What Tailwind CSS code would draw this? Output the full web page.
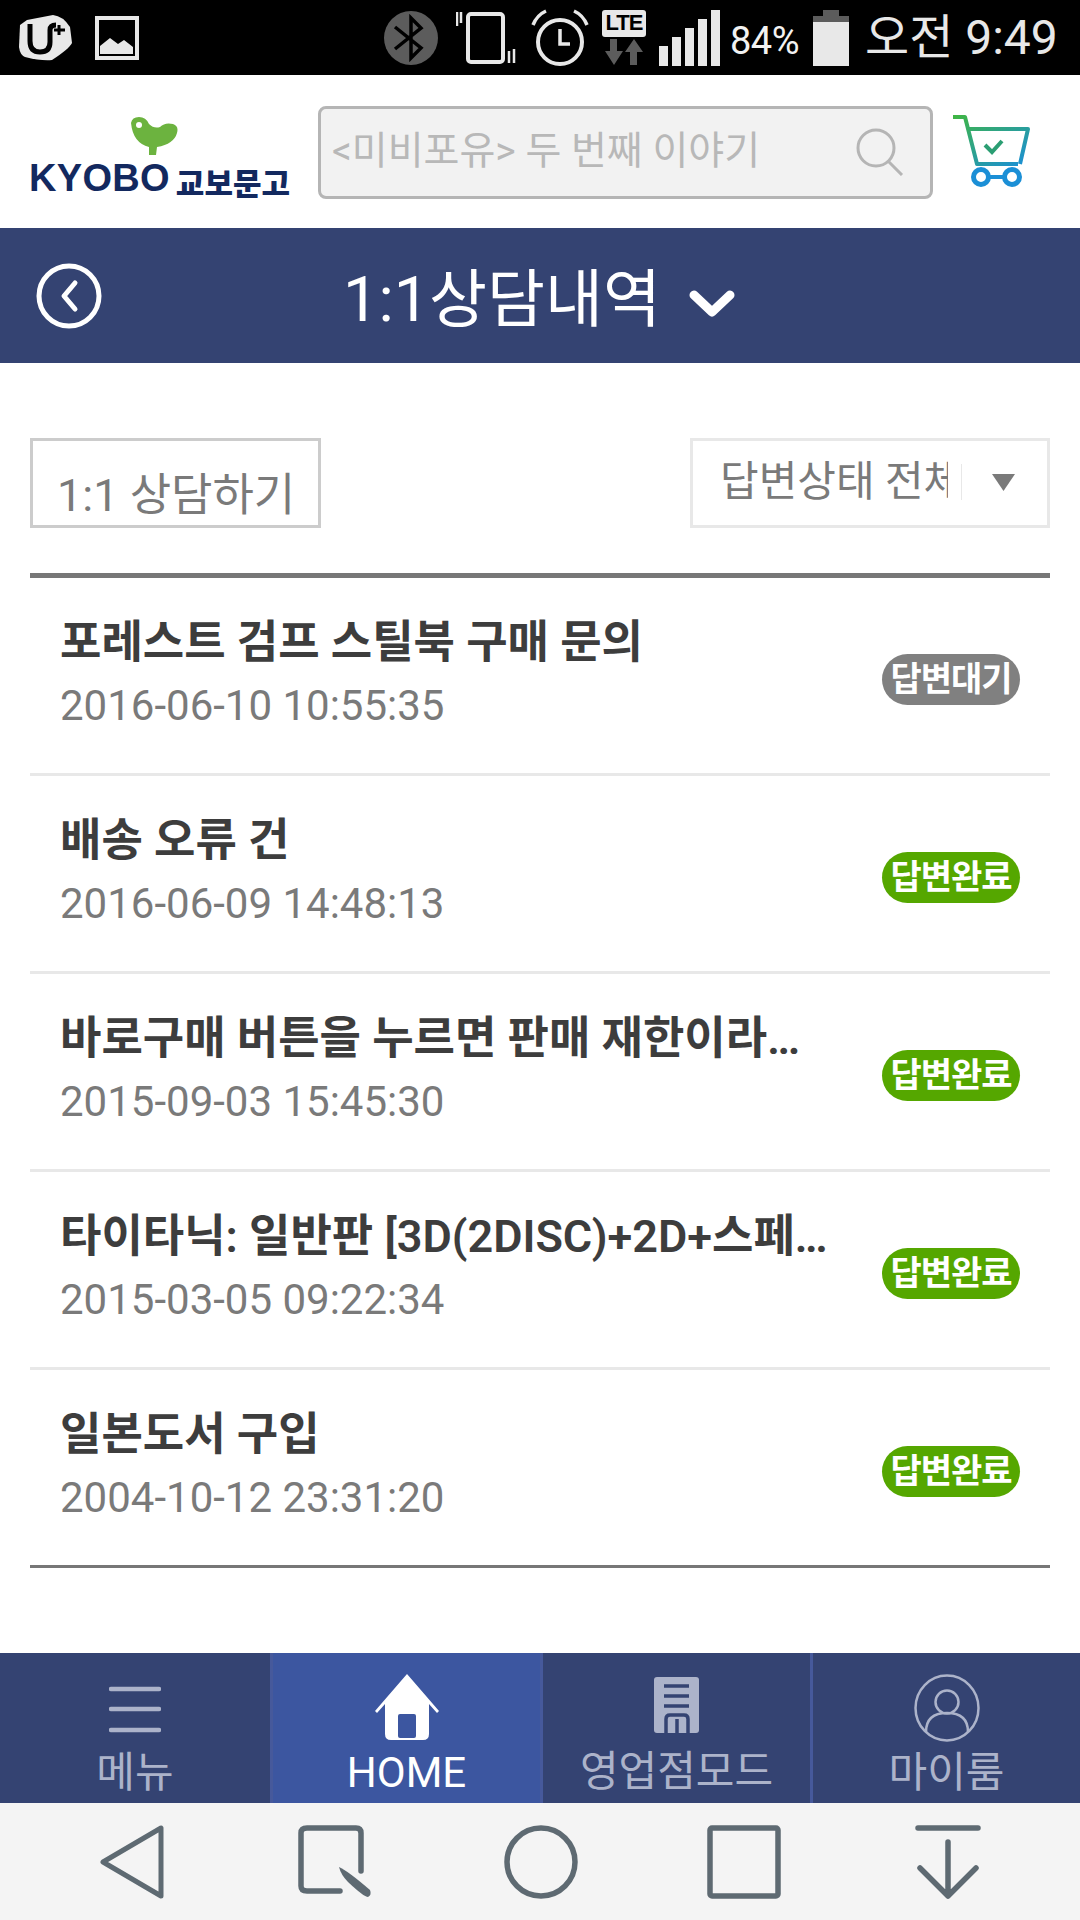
<!DOCTYPE html>
<html lang="ko">
<head>
    <meta charset="UTF-8">
    <meta name="viewport" content="width=device-width, initial-scale=1.0">
    <title>1:1상담내역 - 교보문고</title>
    <script src="https://cdn.jsdelivr.net/npm/@tailwindcss/browser@4"></script>
</head>
<body class="bg-white w-[1080px] h-[1920px] overflow-hidden flex flex-col font-['Roboto','Noto_Sans_CJK_KR',sans-serif]">
    <!-- status bar -->
    <div class="h-[75px] bg-black flex items-center text-[#e8e8e8] shrink-0">
        <svg class="ml-[19px] w-[53px] h-[46px]" viewBox="0 0 53 46">
            <path d="M8 5 L34 0 Q44 1 51 12 L53 28 Q50 34 33 45 Q22 46 6 42 Q1 40 0 32 L1 10 Z" fill="#e8e8e8"/>
            <path d="M11 9 V26 Q11 37 21 37 Q31 37 31 27 V15 Q31 10 37 10" fill="none" stroke="#000" stroke-width="5"/>
            <path d="M40 10 V20 M35 15 H46" fill="none" stroke="#000" stroke-width="3"/>
        </svg>
        <svg class="ml-[23px] w-[44px] h-[44px]" viewBox="0 0 44 44">
            <rect x="2" y="2" width="40" height="40" fill="none" stroke="#e8e8e8" stroke-width="4"/>
            <path d="M5 38 V30 L15 22 L23 28 L29 24 L38 31 V38 Z" fill="#e8e8e8"/>
        </svg>
        <svg class="ml-[245px] w-[54px] h-[54px]" viewBox="0 0 54 54">
            <circle cx="27" cy="27" r="27" fill="#5c5c5c"/>
            <path d="M11 16 L37 37 L27 47 V7 L37 17 L11 38" fill="none" stroke="#000" stroke-width="3.5"/>
        </svg>
        <svg class="ml-[18px] w-[60px] h-[54px]" viewBox="0 0 60 54">
            <rect x="12" y="3" width="35" height="48" rx="3" fill="none" stroke="#e8e8e8" stroke-width="4"/>
            <path d="M1 1 V15 M5 1 V12" stroke="#e8e8e8" stroke-width="2.5"/>
            <path d="M53 40 V52 M58 38 V52" stroke="#e8e8e8" stroke-width="2.5"/>
        </svg>
        <svg class="ml-[14px] w-[60px] h-[60px]" viewBox="0 0 60 60">
            <circle cx="30" cy="34" r="22" fill="none" stroke="#e8e8e8" stroke-width="4"/>
            <path d="M30 21 V36 H40" fill="none" stroke="#e8e8e8" stroke-width="3.5"/>
            <path d="M3 17 Q7 7 16 3 M57 17 Q53 7 44 3" fill="none" stroke="#e8e8e8" stroke-width="3.5"/>
        </svg>
        <div class="ml-[12px] w-[44px] h-[56px] relative">
            <div class="h-[27px] bg-[#e8e8e8] rounded-[3px] flex items-center justify-center text-[22px] leading-none font-bold text-black tracking-[-1px] font-['Liberation_Sans']">LTE</div>
            <svg class="absolute left-[2px] top-[29px] w-[40px] h-[27px]" viewBox="0 0 40 27">
                <path d="M6 0 H13 V12 H19 L10 26 L1 12 H6 Z M26 26 H33 V13 H39 L30 0 L21 13 H26 Z" fill="#5c5c5c"/>
            </svg>
        </div>
        <svg class="ml-[13px] w-[61px] h-[56px]" viewBox="0 0 61 56">
            <path d="M0 36 H9 V56 H0 Z M13 27 H22 V56 H13 Z M26 18 H35 V56 H26 Z M39 9 H48 V56 H39 Z M52 0 H61 V56 H52 Z" fill="#e8e8e8"/>
        </svg>
        <span class="ml-[10px] text-[38px] leading-none text-[#f2f2f2] mt-[6px] tracking-[-0.5px]">84%</span>
        <svg class="ml-[14px] w-[36px] h-[56px]" viewBox="0 0 36 56">
            <path d="M10 0 H26 V6 H36 V12 H0 V6 H10 Z" fill="#5c5c5c"/>
            <rect x="0" y="12" width="36" height="44" fill="#e8e8e8"/>
        </svg>
        <span class="ml-[16px] text-[48px] leading-none whitespace-nowrap">오전 9:49</span>
    </div>

    <!-- logo, search, cart -->
    <div class="h-[153px] flex items-center relative shrink-0">
        <div class="ml-[29px] w-[263px] flex flex-col items-start mt-[10px]">
            <svg class="ml-[101px] w-[48px] h-[40px]" viewBox="0 0 48 40">
                <path d="M1 6 Q2 0 9 0 Q16 0 19 7 Q24 12 30 10 Q35 5 43 7 Q49 9 47 16 Q44 27 27 30 L26 38 H19 L19 30 Q3 26 1 6 Z" fill="#6cb33f"/>
                <circle cx="9" cy="8" r="3" fill="#fff"/>
            </svg>
            <div class="flex items-end leading-none text-[#13295f] font-bold mt-[2px] whitespace-nowrap">
                <span class="text-[38px] tracking-[0.3px] font-['Liberation_Sans']">KYOBO</span>
                <span class="ml-[6px] text-[31px] font-black font-['Noto_Sans_CJK_KR']">교보문고</span>
            </div>
        </div>
        <div class="ml-[26px] w-[615px] h-[93px] bg-[#f2f2f2] border-[3px] border-[#b5b5b5] rounded-[8px] flex items-center pl-[11px] mt-[1px]">
            <span class="text-[39px] leading-none text-[#b8b8b8] whitespace-nowrap mb-[2px]">&lt;미비포유&gt; 두 번째 이야기</span>
        </div>
        <svg class="absolute left-[856px] top-[53px] w-[48px] h-[48px]" viewBox="0 0 48 48">
            <circle cx="20" cy="20" r="18" fill="none" stroke="#b5b5b5" stroke-width="3"/>
            <path d="M32 33 L46 47" stroke="#b5b5b5" stroke-width="3"/>
        </svg>
        <svg class="ml-[19px] w-[78px] h-[73px]" viewBox="0 0 78 73">
            <defs>
                <linearGradient id="cartGrad" x1="0" y1="0" x2="1" y2="1">
                    <stop offset="0" stop-color="#3fb544"/>
                    <stop offset="1" stop-color="#1b8fd6"/>
                </linearGradient>
            </defs>
            <path d="M1 2 H13 L25 49 H66 M15 14 H76 L68 49" fill="none" stroke="url(#cartGrad)" stroke-width="4" stroke-linejoin="round"/>
            <path d="M33 30 L40 37 L50 26" fill="none" stroke="#2b9e73" stroke-width="4"/>
            <circle cx="29" cy="62" r="7.5" fill="none" stroke="#1b8fd6" stroke-width="5"/>
            <circle cx="60" cy="62" r="7.5" fill="none" stroke="#1b8fd6" stroke-width="5"/>
            <path d="M36 62 H53" stroke="#1b8fd6" stroke-width="4"/>
        </svg>
    </div>

    <!-- page title -->
    <div class="h-[135px] bg-[#344372] flex items-center relative shrink-0">
        <svg class="ml-[36px] w-[66px] h-[66px]" viewBox="0 0 66 66">
            <circle cx="33" cy="33" r="30" fill="none" stroke="#fff" stroke-width="5"/>
            <path d="M39 20 L28 33 L39 46" fill="none" stroke="#fff" stroke-width="5" stroke-linecap="round" stroke-linejoin="round"/>
        </svg>
        <span class="ml-[241px] text-[63px] leading-none text-white whitespace-nowrap mt-[8px]">1:1상담내역</span>
        <svg class="ml-[28px] mt-[16px] w-[46px] h-[28px]" viewBox="0 0 46 28">
            <path d="M5 5 L23 22 L41 5" fill="none" stroke="#fff" stroke-width="9" stroke-linecap="round" stroke-linejoin="round"/>
        </svg>
    </div>

    <!-- filters -->
    <div class="mt-[75px] mx-[30px] flex justify-between">
        <div class="w-[291px] h-[90px] border-[3px] border-[#cccccc] flex items-end pb-[7px] pl-[24px]">
            <span class="text-[45px] leading-none text-[#7a7a7a] whitespace-nowrap">1:1 상담하기</span>
        </div>
        <div class="w-[360px] h-[90px] border-[3px] border-[#e8e8e8] flex items-center pl-[27px]">
            <span class="w-[228px] overflow-hidden text-[42px] leading-none text-[#7a7a7a] whitespace-nowrap mb-[2px]">답변상태 전체</span>
            <span class="ml-[13px] w-px h-[36px] bg-[#e8e8e8] mb-[2px]"></span>
            <svg class="ml-[30px] mb-[2px] w-[23px] h-[17px]" viewBox="0 0 23 17">
                <path d="M0 0 H23 L11.5 17 Z" fill="#7a7a7a"/>
            </svg>
        </div>
    </div>

    <!-- inquiry list -->
    <ul class="mt-[45px] mx-[30px] border-t-[5px] border-[#777777]">
        <li class="h-[198px] border-b-[3px] border-[#e8e8e8] flex items-center justify-between pl-[30px] pr-[30px]">
            <div class="min-w-0 w-[780px] mt-[-9px]">
                <p class="text-[45px] leading-[58px] font-semibold text-[#3d3d3d] truncate">포레스트 검프 스틸북 구매 문의</p>
                <p class="text-[42px] leading-[46px] text-[#7a7a7a] mt-[11px]">2016-06-10 10:55:35</p>
            </div>
            <span class="w-[138px] h-[51px] rounded-full bg-[#808080] text-white text-[34px] leading-none font-bold flex items-center justify-center whitespace-nowrap shrink-0 tracking-[-1px] mt-[7px]">답변대기</span>
        </li>
        <li class="h-[198px] border-b-[3px] border-[#e8e8e8] flex items-center justify-between pl-[30px] pr-[30px]">
            <div class="min-w-0 w-[780px] mt-[-9px]">
                <p class="text-[45px] leading-[58px] font-semibold text-[#3d3d3d] truncate">배송 오류 건</p>
                <p class="text-[42px] leading-[46px] text-[#7a7a7a] mt-[11px]">2016-06-09 14:48:13</p>
            </div>
            <span class="w-[138px] h-[51px] rounded-full bg-[#55a700] text-white text-[34px] leading-none font-bold flex items-center justify-center whitespace-nowrap shrink-0 tracking-[-1px] mt-[7px]">답변완료</span>
        </li>
        <li class="h-[198px] border-b-[3px] border-[#e8e8e8] flex items-center justify-between pl-[30px] pr-[30px]">
            <div class="min-w-0 w-[780px] mt-[-9px]">
                <p class="text-[45px] leading-[58px] font-semibold text-[#3d3d3d] whitespace-nowrap">바로구매 버튼을 누르면 판매 재한이라<span class="tracking-[-2.5px]">...</span></p>
                <p class="text-[42px] leading-[46px] text-[#7a7a7a] mt-[11px]">2015-09-03 15:45:30</p>
            </div>
            <span class="w-[138px] h-[51px] rounded-full bg-[#55a700] text-white text-[34px] leading-none font-bold flex items-center justify-center whitespace-nowrap shrink-0 tracking-[-1px] mt-[7px]">답변완료</span>
        </li>
        <li class="h-[198px] border-b-[3px] border-[#e8e8e8] flex items-center justify-between pl-[30px] pr-[30px]">
            <div class="min-w-0 w-[780px] mt-[-9px]">
                <p class="text-[45px] leading-[58px] font-semibold text-[#3d3d3d] whitespace-nowrap">타이타닉: 일반판 [3D(2DISC)+2D+스페<span class="tracking-[-2.5px]">...</span></p>
                <p class="text-[42px] leading-[46px] text-[#7a7a7a] mt-[11px]">2015-03-05 09:22:34</p>
            </div>
            <span class="w-[138px] h-[51px] rounded-full bg-[#55a700] text-white text-[34px] leading-none font-bold flex items-center justify-center whitespace-nowrap shrink-0 tracking-[-1px] mt-[7px]">답변완료</span>
        </li>
        <li class="h-[198px] border-b-[3px] border-[#777777] flex items-center justify-between pl-[30px] pr-[30px]">
            <div class="min-w-0 w-[780px] mt-[-9px]">
                <p class="text-[45px] leading-[58px] font-semibold text-[#3d3d3d] truncate">일본도서 구입</p>
                <p class="text-[42px] leading-[46px] text-[#7a7a7a] mt-[11px]">2004-10-12 23:31:20</p>
            </div>
            <span class="w-[138px] h-[51px] rounded-full bg-[#55a700] text-white text-[34px] leading-none font-bold flex items-center justify-center whitespace-nowrap shrink-0 tracking-[-1px] mt-[7px]">답변완료</span>
        </li>
    </ul>

    <!-- bottom tabs -->
    <div class="mt-auto h-[150px] bg-[#344372] grid grid-cols-4 text-[#acb3ca] shrink-0">
        <div class="flex flex-col items-center">
            <svg class="mt-[33px] w-[52px] h-[48px]" viewBox="0 0 52 48">
                <path d="M2 3 H50 M2 23 H50 M2 44 H50" stroke="#acb3ca" stroke-width="4.5" stroke-linecap="round"/>
            </svg>
            <span class="mt-[18px] text-[42px] leading-none">메뉴</span>
        </div>
        <div class="flex flex-col items-center bg-[#3c56a0] border-l-[3px] border-[#46599b] text-white">
            <svg class="mt-[21px] w-[64px] h-[66px]" viewBox="0 0 64 66">
                <path d="M32 0 L64 37 L62 39 L54 30 V60 Q54 66 48 66 H16 Q10 66 10 60 V30 L2 39 L0 37 Z" fill="#fff"/>
                <rect x="23" y="40" width="18" height="24" rx="2" fill="#3c56a0"/>
            </svg>
            <span class="mt-[12px] text-[42px] leading-none">HOME</span>
        </div>
        <div class="flex flex-col items-center border-l-[3px] border-[#46599b]">
            <svg class="mt-[24px] w-[45px] h-[56px]" viewBox="0 0 45 56">
                <rect width="45" height="56" rx="3" fill="#acb3ca"/>
                <path d="M10 9 H35 M10 19 H35 M10 29 H35" stroke="#344372" stroke-width="3.5"/>
                <path d="M12 56 V42 Q12 38 16 38 H30 Q34 38 34 42 V56 M23 42 V56" fill="none" stroke="#344372" stroke-width="3.5"/>
            </svg>
            <span class="mt-[18px] text-[42px] leading-none">영업점모드</span>
        </div>
        <div class="flex flex-col items-center border-l-[3px] border-[#46599b]">
            <svg class="mt-[21px] w-[66px] h-[68px]" viewBox="0 0 66 68">
                <ellipse cx="33" cy="34" rx="31.5" ry="32.5" fill="none" stroke="#acb3ca" stroke-width="2.5"/>
                <circle cx="33" cy="28" r="11.5" fill="none" stroke="#acb3ca" stroke-width="2.5"/>
                <path d="M12 58 Q12 39 33 39 Q54 39 54 58" fill="none" stroke="#acb3ca" stroke-width="2.5"/>
            </svg>
            <span class="mt-[10px] text-[42px] leading-none">마이룸</span>
        </div>
    </div>

    <!-- navigation bar -->
    <div class="h-[117px] bg-[#f4f4f4] flex items-center relative shrink-0">
        <svg class="ml-[100px] w-[64px] h-[74px]" viewBox="0 0 64 74">
            <path d="M3 37 L61 3 V71 Z" fill="none" stroke="#5e6a72" stroke-width="5" stroke-linejoin="round"/>
        </svg>
        <svg class="ml-[134px] w-[76px] h-[74px]" viewBox="0 0 76 74">
            <path d="M63 46 V8 Q63 3 58 3 H9 Q3 3 3 8 V61 Q3 66 9 66 H42" fill="none" stroke="#5e6a72" stroke-width="5.5" stroke-linecap="round"/>
            <path d="M41 42 Q50 46 72 65 Q74 70 70 72 Q66 72 50 57 Q43 50 41 42 Z" fill="#5e6a72"/>
        </svg>
        <svg class="ml-[130px] w-[74px] h-[74px]" viewBox="0 0 74 74">
            <circle cx="37" cy="37" r="34" fill="none" stroke="#5e6a72" stroke-width="5.5"/>
        </svg>
        <svg class="ml-[129px] w-[74px] h-[74px]" viewBox="0 0 74 74">
            <rect x="3" y="3" width="68" height="68" rx="2" fill="none" stroke="#5e6a72" stroke-width="5.5"/>
        </svg>
        <svg class="ml-[134px] w-[66px] h-[74px]" viewBox="0 0 66 74">
            <path d="M3 3 H63 M33 17 V71 M5 43 L33 71 L61 43" fill="none" stroke="#5e6a72" stroke-width="5.5" stroke-linecap="round" stroke-linejoin="round"/>
        </svg>
    </div>
</body>
</html>
